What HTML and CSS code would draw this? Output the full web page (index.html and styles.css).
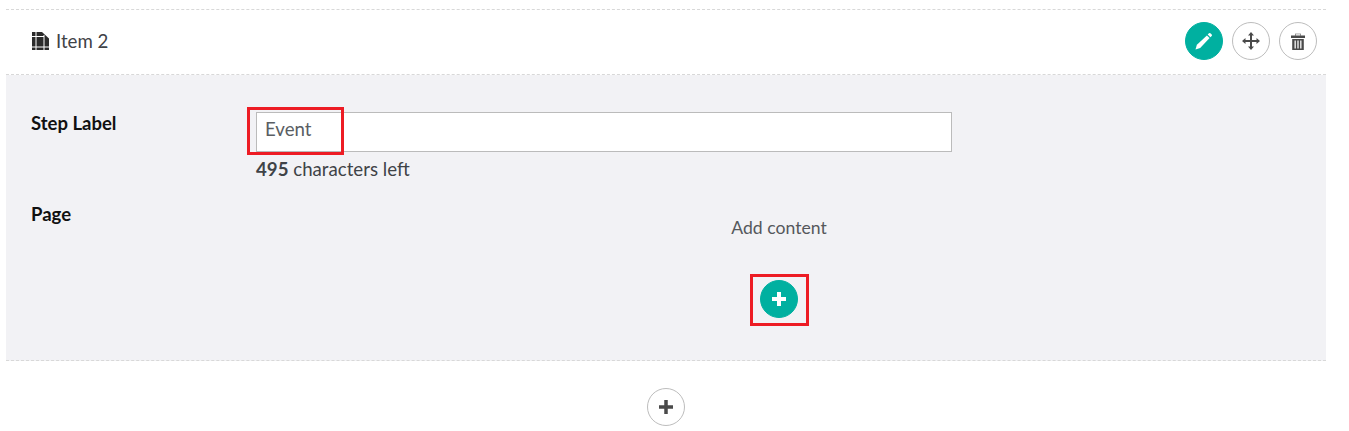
FILE: index.html

```html
<!DOCTYPE html>
<html lang="en">
<head>
    <meta charset="UTF-8">
    <meta name="viewport" content="width=device-width, initial-scale=1.0">
    <title>Item 2</title>
    <link rel="stylesheet" href="styles.css">
</head>
<body>

    <div class="item">
        <div class="item-head">
            <div class="item-title">
                <svg class="item-icon" width="17" height="18" viewBox="0 0 17 18">
                    <path d="M0 0h10l7 6.500V18H0z" fill="#2b2b2b"/>
                    <path d="M4 0v18M12 3v15M0 4.500h12M0 15h17" stroke="#fff" stroke-width="1" fill="none"/>
                </svg>
                <span>Item 2</span>
            </div>
            <div class="item-actions">
                <button class="round round-green">
                    <svg width="18" height="18" viewBox="0 0 18 18">
                        <path d="M0.500 17.500l1.400-4.700L11.900 3.400l2.700 2.700L5.200 16.100z" fill="#fff"/>
                        <path d="M12.700 2.600l1.300-1.300a1 1 0 0 1 1.400 0l1.300 1.300a1 1 0 0 1 0 1.400l-1.300 1.300z" fill="#fff"/>
                    </svg>
                </button>
                <button class="round">
                    <svg width="18" height="18" viewBox="0 0 18 18">
                        <path d="M9 2v14M2 9h14" stroke="#4a4a4a" stroke-width="2" fill="none"/>
                        <path d="M9 0l3 3.500H6zM9 18l3-3.500H6zM0 9l3.500-3v6zM18 9l-3.500-3v6z" fill="#4a4a4a"/>
                    </svg>
                </button>
                <button class="round">
                    <svg width="14" height="17" viewBox="0 0 14 17">
                        <path d="M0 2.500h14V5H0zM4 2.500V.8h6v1.700" fill="#4a4a4a"/>
                        <path d="M4.500 2.500V1.200h5v1.300" fill="#fff"/>
                        <path d="M1.200 6h11.600v11H1.200z" fill="#4a4a4a"/>
                        <path d="M4.200 7.500v8M7 7.500v8M9.800 7.500v8" stroke="#e4e4e4" stroke-width="1.500"/>
                    </svg>
                </button>
            </div>
        </div>

        <div class="item-body">
            <div class="row">
                <label class="row-label">Step Label</label>
                <div class="row-field">
                    <div class="input-wrap">
                        <input class="input" type="text" value="Event">
                        <span class="mark mark-input"></span>
                    </div>
                    <div class="count"><b>495</b> characters left</div>
                </div>
            </div>
            <div class="row row-page">
                <label class="row-label">Page</label>
                <div class="row-field content-picker">
                    <div class="add-text">Add content</div>
                    <div class="add-wrap">
                        <button class="round round-green">
                            <svg width="14" height="14" viewBox="0 0 14 14">
                                <path d="M5 0h4v5h5v4H9v5H5V9H0V5h5z" fill="#fff"/>
                            </svg>
                        </button>
                        <span class="mark mark-plus"></span>
                    </div>
                </div>
            </div>
        </div>

        <div class="item-foot">
            <button class="round">
                <svg width="14" height="14" viewBox="0 0 14 14">
                    <path d="M5.250 0h3.500v5.250H14v3.500H8.750V14h-3.500V8.750H0v-3.500h5.250z" fill="#4a4a4a"/>
                </svg>
            </button>
        </div>
    </div>

</body>
</html>
```

FILE: styles.css

```css
*{
    padding: 0;
    margin: 0;
    box-sizing: border-box;
}

body{
    background-color: white;
    height: 431px;
    overflow: hidden;
    font-family: Lato, sans-serif;
    color: #3f4347;
}

.item{
    width: 1320px;
    margin: 9px 0 0 6px;
    border-top: 1px dashed #d8d8d8;
}

.item-head{
    height: 65px;
    padding: 0 9px 2px 26px;
    display: flex;
    justify-content: space-between;
    align-items: center;
    border-bottom: 1px dashed #d8d8d8;
}

.item-title{
    display: flex;
    align-items: center;
    gap: 7px;
    font-size: 18.67px;
}

.item-actions{
    display: flex;
    gap: 9px;
}

.round{
    width: 38px;
    height: 38px;
    border-radius: 50%;
    border: 1px solid #bdbdbd;
    background-color: white;
    display: flex;
    justify-content: center;
    align-items: center;
}

.round-green{
    background-color: #00b0a0;
    border-color: #00b0a0;
}

.item-body{
    height: 286px;
    padding: 37px 24px 0 25px;
    background-color: #f2f2f5;
    border-bottom: 1px dashed #d8d8d8;
}

.row{
    display: flex;
}

.row-page{
    margin-top: 22px;
}

.row-label{
    width: 225px;
    font-size: 18.5px;
    font-weight: bold;
    color: #111;
    line-height: 22px;
}

.row-page .row-label{
    padding-top: 1px;
}

.row-field{
    flex: 1;
}

.input-wrap{
    position: relative;
    width: 696px;
}

.input{
    width: 100%;
    height: 40px;
    padding: 0 8px 7px;
    border: 1px solid #bbb;
    background-color: white;
    font-family: Lato, sans-serif;
    font-size: 18.67px;
    color: #5a5e63;
    outline: none;
}

.count{
    margin-top: 6px;
    font-size: 18.67px;
    line-height: 22px;
}

.content-picker{
    display: flex;
    flex-direction: column;
    align-items: center;
}

.add-text{
    margin-top: 14px;
    font-size: 17.6px;
    line-height: 24px;
    color: #55585c;
}

.add-wrap{
    position: relative;
    margin-top: 40px;
}

.mark{
    position: absolute;
    border: 3px solid #ed1c24;
}

.mark-input{
    left: -9px;
    top: -5px;
    width: 97px;
    height: 48px;
}

.mark-plus{
    left: -10px;
    top: -6px;
    width: 59px;
    height: 52px;
}

.item-foot{
    padding-top: 27px;
    display: flex;
    justify-content: center;
}
```
